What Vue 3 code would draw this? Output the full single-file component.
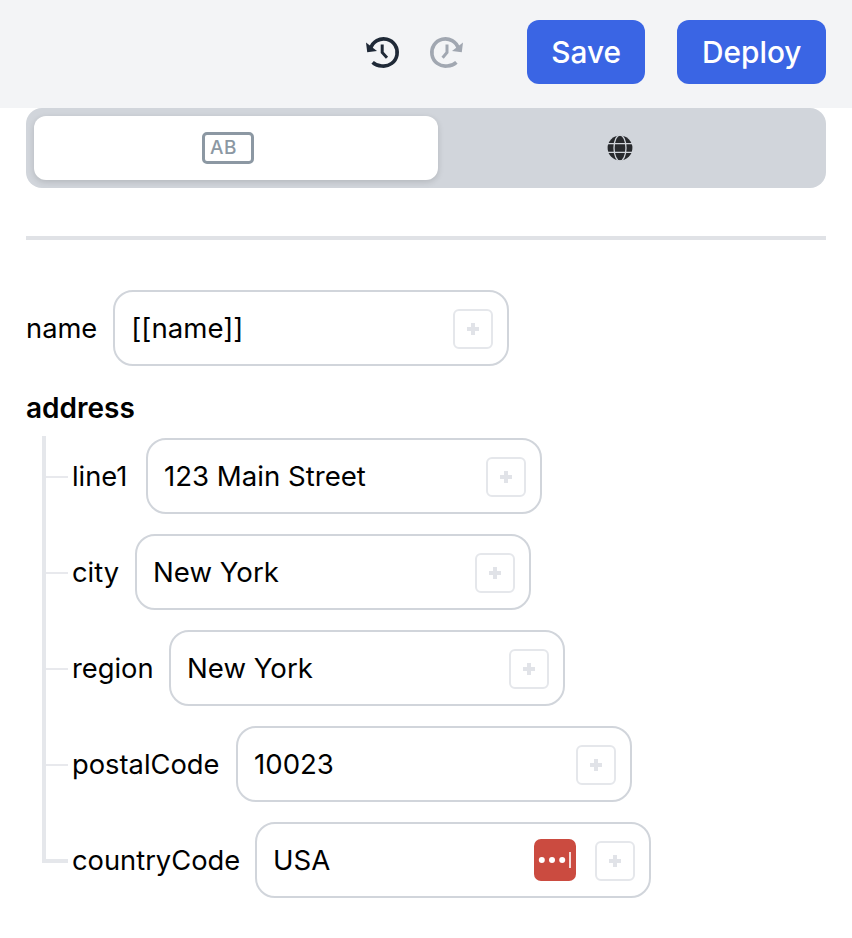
<script setup>
const fields = [
  { key: 'line1', value: '123 Main Street', labelWidth: 58 },
  { key: 'city', value: 'New York', labelWidth: 47 },
  { key: 'region', value: 'New York', labelWidth: 81 },
  { key: 'postalCode', value: '10023', labelWidth: 148 },
  { key: 'countryCode', value: 'USA', labelWidth: 167, manager: true }
]
</script>

<template>
  <div class="page">
    <header class="topbar">
      <button type="button" class="history" aria-label="Undo">
        <svg width="36" height="36" viewBox="0 0 36 36" fill="none" stroke="#1f2937" stroke-width="3.6">
          <path d="M6.6 14.5A13.6 13.6 0 1 1 18 32a13.5 13.5 0 0 1-9.4-3.6" />
          <path d="M18.2 10.5v8l4.8 5.2" stroke-width="3" />
          <path d="M2 8.6l1.2 9.6 9.8-1.2z" fill="#1f2937" stroke="none" />
        </svg>
      </button>
      <button type="button" class="history redo" aria-label="Redo">
        <svg width="36" height="36" viewBox="0 0 36 36" fill="none" stroke="#a1a7b1" stroke-width="3.6">
          <path d="M29.4 14.5A13.6 13.6 0 1 0 18 32a13.5 13.5 0 0 0 9.4-3.6" />
          <path d="M18 10.5v8l-4.4 5.2" stroke-width="3" />
          <path d="M34 8.6l-1.2 9.6-9.8-1.2z" fill="#a1a7b1" stroke="none" />
        </svg>
      </button>
      <button type="button" class="primary save">Save</button>
      <button type="button" class="primary">Deploy</button>
    </header>

    <main class="content">
      <div class="tabs">
        <div class="tab active"><span class="ab">AB</span></div>
        <div class="tab other">
          <svg width="26" height="26" viewBox="0 0 26 26">
            <circle cx="13" cy="13" r="12.4" fill="#27292d" />
            <g fill="none" stroke="#d1d5db" stroke-width="1.3">
              <ellipse cx="13" cy="13" rx="6" ry="13" />
              <path d="M0 8.6h26M0 17.4h26" />
            </g>
          </svg>
        </div>
      </div>

      <hr class="divider" />

      <div class="row">
        <label class="label">name</label>
        <div class="field">
          <input class="value" value="[[name]]" />
          <span class="add"><span class="plus"></span></span>
        </div>
      </div>

      <div class="group">address</div>

      <div class="tree">
        <div v-for="f in fields" :key="f.key" class="row leaf">
          <label class="label" :style="{ width: f.labelWidth + 'px' }">{{ f.key }}</label>
          <div class="field">
            <input class="value" :value="f.value" />
            <svg v-if="f.manager" class="manager" width="42" height="42" viewBox="0 0 42 42">
              <rect width="42" height="42" rx="7" fill="#cb4b40" />
              <circle cx="7.8" cy="21" r="3" fill="#fff" />
              <circle cx="18" cy="21" r="3" fill="#fff" />
              <circle cx="28.2" cy="21" r="3" fill="#fff" />
              <rect x="35.2" y="13" width="1.6" height="16" fill="#fff" />
            </svg>
            <span class="add"><span class="plus"></span></span>
          </div>
        </div>
      </div>
    </main>
  </div>
</template>

<style scoped>
.page {
  width: 852px;
  min-height: 938px;
  background: #fff;
  font-family: Inter, "Liberation Sans", sans-serif;
  color: #000;
}
.topbar {
  height: 108px;
  box-sizing: border-box;
  padding: 20px 26px 24px 0;
  background: #f3f4f6;
  display: flex;
  justify-content: flex-end;
  align-items: center;
}
.history {
  width: 36px;
  height: 36px;
  padding: 0;
  border: none;
  background: none;
  display: flex;
  margin-right: 29px;
}
.redo {
  margin-right: 62px;
}
.primary {
  height: 64px;
  padding: 0 24.5px;
  border: none;
  border-radius: 12px;
  background: #3a65e4;
  color: #fff;
  font: 500 29.8px Inter, sans-serif;
}
.save {
  margin-right: 32px;
}
.content {
  padding: 0 26px;
}
.tabs {
  height: 80px;
  box-sizing: border-box;
  padding: 8px;
  border-radius: 16px;
  background: #d1d5db;
  display: flex;
}
.tab {
  display: flex;
  align-items: center;
  justify-content: center;
  border-radius: 12px;
}
.tab.active {
  flex: 0 0 404px;
  box-sizing: border-box;
  padding-right: 16px;
  background: #fff;
  box-shadow: 0 2px 6px rgba(0, 0, 0, 0.14);
}
.tab.other {
  flex: 1;
  margin-left: -16px;
}
.ab {
  width: 52px;
  height: 32px;
  box-sizing: border-box;
  padding-left: 5px;
  border: 3px solid #8c98a3;
  border-radius: 5px;
  color: #8c98a3;
  font: 500 19px/26px Inter, sans-serif;
  letter-spacing: 0.5px;
}
.divider {
  height: 4px;
  margin: 48px 0 50px;
  border: none;
  background: #e0e2e6;
}
.row {
  display: flex;
  align-items: center;
  gap: 16px;
}
.label {
  flex: none;
  margin-top: 2px;
  font-size: 27.3px;
  line-height: 32px;
  white-space: nowrap;
}
.field {
  width: 396px;
  height: 76px;
  box-sizing: border-box;
  padding: 0 14px 0 16px;
  border: 2px solid #d1d5db;
  border-radius: 20px;
  display: flex;
  align-items: center;
  gap: 20px;
}
.value {
  flex: 1;
  min-width: 0;
  padding: 0;
  border: none;
  outline: none;
  background: none;
  font: 400 27.6px Inter, sans-serif;
  color: #000;
}
.add {
  width: 40px;
  height: 40px;
  flex: none;
  margin-top: 2px;
  box-sizing: border-box;
  border: 2px solid #e5e7eb;
  border-radius: 6px;
  display: flex;
  align-items: center;
  justify-content: center;
}
.plus {
  width: 12px;
  height: 12px;
  background:
    linear-gradient(#e1e3e8, #e1e3e8) center / 12px 4px no-repeat,
    linear-gradient(#e1e3e8, #e1e3e8) center / 4px 12px no-repeat;
}
.manager {
  flex: none;
  margin-right: -1px;
}
.group {
  margin-top: 26px;
  font-size: 28px;
  line-height: 32px;
  font-weight: 600;
}
.tree {
  position: relative;
  margin-top: 14px;
  padding-left: 46px;
  display: flex;
  flex-direction: column;
  gap: 20px;
}
.tree::before {
  content: "";
  position: absolute;
  left: 16px;
  top: -2px;
  bottom: 35px;
  width: 4px;
  background: #e5e7eb;
}
.leaf {
  position: relative;
}
.leaf::before {
  content: "";
  position: absolute;
  left: -26px;
  top: 38px;
  width: 22px;
  height: 2px;
  background: #e8e9ed;
}
.leaf:last-child::before {
  top: 37px;
  height: 4px;
  background: #e5e7eb;
}
</style>
